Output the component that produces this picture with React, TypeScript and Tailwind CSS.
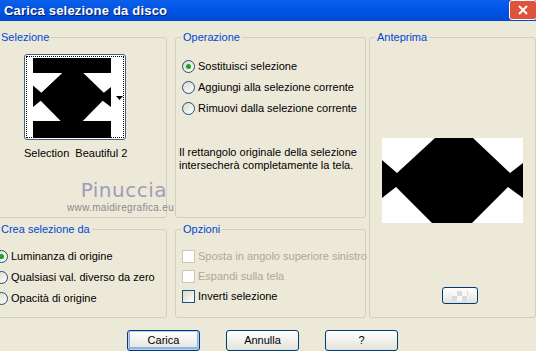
import React from 'react';

const shape = '53,0 91,0 128,35 141,25 141,60 126,49 90,85 50,85 14,49 0,60 0,22 15,35';
const thumbShape =
  '29.3,15 50.3,15 70.8,34.8 78,29.1 78,48.9 69.7,42.7 49.8,63 27.7,63 7.7,42.7 0,48.9 0,27.4 8.3,34.8';

function Radio({ checked, label }: { checked?: boolean; label: string }) {
  return (
    <div className="flex items-center h-[21px]">
      <span className="w-[13px] h-[13px] rounded-full border border-[#1C5180] bg-linear-to-br from-[#DCD9C5] to-white flex items-center justify-center shrink-0">
        {checked && <span className="w-[5px] h-[5px] rounded-full bg-[#21A121]" />}
      </span>
      <span className="ml-[3px] whitespace-nowrap">{label}</span>
    </div>
  );
}

function Check({ label, disabled }: { label: string; disabled?: boolean }) {
  return (
    <div className="flex items-center h-[20px]">
      <span
        className={
          disabled
            ? 'w-[13px] h-[13px] border border-[#CAC8BB] bg-white shrink-0'
            : 'w-[13px] h-[13px] border border-[#1C5180] bg-linear-to-br from-[#DCD9C5] to-white shrink-0'
        }
      />
      <span className={disabled ? 'ml-[3px] text-[#ACA899] whitespace-nowrap' : 'ml-[3px] whitespace-nowrap'}>{label}</span>
    </div>
  );
}

function Group({
  title,
  className,
  legendClass = 'ml-[5px]',
  children,
}: {
  title: string;
  className: string;
  legendClass?: string;
  children?: React.ReactNode;
}) {
  return (
    <fieldset className={'border border-[#D0D0BF] rounded-[3px] m-0 p-0 min-w-0 ' + className}>
      <legend className={legendClass + ' px-[2px] text-[#0046D5] leading-[14px]'}>{title}</legend>
      {children}
    </fieldset>
  );
}

function Btn({ label, focus }: { label: string; focus?: boolean }) {
  return (
    <button
      className={
        'w-[73px] h-[21px] rounded-[3px] border border-[#003C74] bg-linear-to-b from-white to-[#E3E2DA] text-black text-[11px] leading-none ' +
        (focus ? 'shadow-[inset_0_0_0_1px_#B5CFF7,inset_0_-1px_0_2px_#8DB2E3]' : '')
      }
    >
      {label}
    </button>
  );
}

export default function App() {
  return (
    <div className="w-[536px] h-[351px] bg-[#ECE9D8] overflow-hidden relative font-['Liberation_Sans',Arial,sans-serif] text-[11px] text-black">
      {/* title bar */}
      <div className="h-[21px] bg-linear-to-b from-[#0A5FEB] via-[#0054E3] to-[#0049D6] flex items-center justify-between">
        <span className="pl-[4px] text-white font-bold text-[13px] tracking-[0.2px] [text-shadow:1px_1px_0_#0A1E6A]">
          Carica selezione da disco
        </span>
        <span className="w-[28px] h-[20px] -mt-[1px] -mr-[1px] bg-[#E0533B] border border-white rounded-[3px] flex items-center justify-center">
          <svg width="12" height="12" viewBox="0 0 12 12">
            <path d="M2 2 L10 10 M10 2 L2 10" stroke="white" strokeWidth="2" />
          </svg>
        </span>
      </div>

      <div className="flex pt-[9px] -ml-[4px]">
        {/* left column */}
        <div className="w-[171px] flex flex-col gap-[4px]">
          <Group title="Selezione" legendClass="ml-[2px]" className="h-[188px]">
            <div className="ml-[27px] mt-[10px] w-[102px] h-[86px] rounded-[3px] border border-[#44607D] bg-white p-[1px]">
              <div className="h-full border border-dotted border-black flex">
                <svg width="78" height="80" viewBox="0 0 78 80" className="ml-[6px] mt-[1px]">
                  <rect width="78" height="80" fill="black" />
                  <rect y="15" width="78" height="48" fill="white" />
                  <polygon points={thumbShape} fill="black" />
                </svg>
                <svg width="7" height="4" viewBox="0 0 7 4" className="ml-[5px] mt-[39px]">
                  <path d="M0 0 H7 L3.5 4 Z" fill="black" />
                </svg>
              </div>
            </div>
            <div className="ml-[27px] w-[102px] mt-[7px] text-center leading-[13px] whitespace-pre">Selection  Beautiful 2</div>
          </Group>
          <Group title="Crea selezione da" legendClass="ml-[2px]" className="h-[96px]">
            <div className="-ml-[2px] mt-[10px] flex flex-col">
              <Radio checked label="Luminanza di origine" />
              <Radio label="Qualsiasi val. diverso da zero" />
              <Radio label="Opacità di origine" />
            </div>
          </Group>
        </div>

        {/* middle column */}
        <div className="w-[191px] ml-[8px] flex flex-col gap-[4px]">
          <Group title="Operazione" className="h-[188px]">
            <div className="ml-[6px] mt-[12px] flex flex-col">
              <Radio checked label="Sostituisci selezione" />
              <Radio label="Aggiungi alla selezione corrente" />
              <Radio label="Rimuovi dalla selezione corrente" />
            </div>
            <p className="ml-[3px] mt-[27px] leading-[13px]">
              Il rettangolo originale della selezione
              <br />
              intersecherà completamente la tela.
            </p>
          </Group>
          <Group title="Opzioni" className="h-[96px]">
            <div className="ml-[6px] mt-[10px] flex flex-col">
              <Check disabled label="Sposta in angolo superiore sinistro" />
              <Check disabled label="Espandi sulla tela" />
              <Check label="Inverti selezione" />
            </div>
          </Group>
        </div>

        {/* right column */}
        <div className="w-[167px] ml-[3px]">
          <Group title="Anteprima" className="h-[288px] flex flex-col items-start">
            <svg width="141" height="85" viewBox="0 0 141 85" className="ml-[12px] mt-[94px]">
              <rect width="141" height="85" fill="white" />
              <polygon points={shape} fill="black" />
            </svg>
            <div className="ml-[72px] mt-[64px] w-[36px] h-[17px] rounded-[3px] border border-[#003C74] bg-linear-to-b from-white to-[#E3E2DA] flex items-center justify-center">
              <div className="w-[16px] h-[10px] bg-[repeating-conic-gradient(#DADADA_0_25%,#F8F8F8_0_50%)] bg-[length:10px_10px]" />
            </div>
          </Group>
        </div>
      </div>

      {/* buttons */}
      <div className="flex gap-[26px] pl-[127px] mt-[12px]">
        <Btn label="Carica" focus />
        <Btn label="Annulla" />
        <Btn label="?" />
      </div>

      {/* watermark */}
      <div className="absolute left-[62px] top-[177px] w-[112px] flex flex-col items-end pointer-events-none">
        <span className="text-[20px] leading-[26px] text-[#A09CB8] font-['DejaVu_Sans',sans-serif] tracking-[0.5px] mr-[7px]">Pinuccia</span>
        <span className="text-[10px] leading-[10px] text-[#8C8A92] tracking-[0.3px] whitespace-nowrap">www.maidiregrafica.eu</span>
      </div>
    </div>
  );
}
